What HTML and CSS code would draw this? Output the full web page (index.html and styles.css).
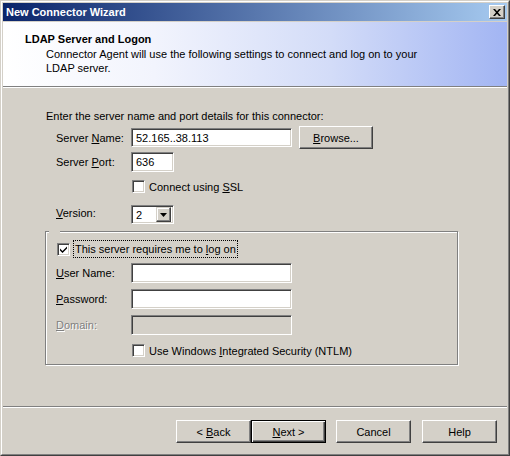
FILE: index.html
```html
<!DOCTYPE html>
<html>
<head>
<meta charset="utf-8">
<link rel="stylesheet" href="styles.css">
</head>
<body>
<div class="window">
  <div class="frame">
    <div class="titlebar">
      <span class="title">New Connector Wizard</span>
      <span class="closebtn"><svg width="8" height="7" viewBox="0 0 8 7"><path d="M0 0h2l2 2.2L6 0h2L5 3.5 8 7H6L4 4.8 2 7H0l3-3.5z" fill="#000"/></svg></span>
    </div>
    <div class="header">
      <div class="h-title">LDAP Server and Logon</div>
      <div class="h-desc">Connector Agent will use the following settings to connect and log on to your<br>LDAP server.</div>
    </div>
    <div class="sep"></div>
    <div class="body">
      <div class="content">
        <div class="intro">Enter the server name and port details for this connector:</div>
        <div class="row row-name">
          <span class="label">Server <u>N</u>ame:</span>
          <span class="field field-name">52.165..38.113</span>
          <span class="btn btn-browse"><span><u>B</u>rowse...</span></span>
        </div>
        <div class="row row-port">
          <span class="label">Server <u>P</u>ort:</span>
          <span class="field field-port">636</span>
        </div>
        <div class="row row-ssl">
          <span class="check"></span>
          <span class="check-text">Connect using <u>S</u>SL</span>
        </div>
        <div class="row row-version">
          <span class="label"><u>V</u>ersion:</span>
          <span class="combo"><span class="combo-val">2</span><span class="combo-btn"><svg width="7" height="4" viewBox="0 0 7 4"><path d="M0 0h7L3.5 4z" fill="#000"/></svg></span></span>
        </div>
        <div class="group">
          <span class="group-gap"></span>
          <div class="row row-logon">
            <span class="check checked"><svg width="7" height="7" viewBox="0 0 7 7"><path d="M0 2.5l2.5 2.5L7 0.5v2L2.5 7 0 4.5z" fill="#000"/></svg></span>
            <span class="focus">This server requires me to <u>l</u>og on</span>
          </div>
          <div class="row row-user">
            <span class="label"><u>U</u>ser Name:</span>
            <span class="field field-name"></span>
          </div>
          <div class="row row-pass">
            <span class="label"><u>P</u>assword:</span>
            <span class="field field-name"></span>
          </div>
          <div class="row row-domain">
            <span class="label disabled"><u>D</u>omain:</span>
            <span class="field field-name field-disabled"></span>
          </div>
          <div class="row row-ntlm">
            <span class="check"></span>
            <span class="check-text">Use Windows <u>I</u>ntegrated Security (NTLM)</span>
          </div>
        </div>
      </div>
    </div>
    <div class="sep"></div>
    <div class="buttons">
      <span class="btn btn-wiz"><span>&lt; <u>B</u>ack</span></span>
      <span class="btn btn-wiz btn-default"><span><u>N</u>ext &gt;</span></span>
      <span class="btn btn-wiz btn-cancel">Cancel</span>
      <span class="btn btn-wiz btn-help">Help</span>
    </div>
  </div>
</div>
</body>
</html>
```
FILE: styles.css
```css
* { box-sizing: border-box; }
html, body { margin: 0; padding: 0; }
body {
  font-family: "Liberation Sans", Arial, sans-serif;
  font-size: 11px;
  color: #000;
  background: #d4d0c8;
}
u { text-decoration: underline; text-underline-offset: 1px; }

.window {
  width: 510px;
  height: 456px;
  border: 1px solid;
  border-color: #d4d0c8 #404040 #404040 #d4d0c8;
}
.frame {
  height: 100%;
  border: 1px solid;
  border-color: #fff #808080 #808080 #fff;
  padding: 1px;
  background: #d4d0c8;
  display: flex;
  flex-direction: column;
}

.titlebar {
  height: 18px;
  margin-bottom: 1px;
  flex: none;
  background: linear-gradient(to right, #0a246a, #a6caf0);
  display: flex;
  align-items: center;
  justify-content: space-between;
  padding: 0 2px 0 3px;
}
.title {
  color: #fff;
  font-weight: bold;
  font-size: 11px;
}
.closebtn {
  width: 16px;
  height: 14px;
  background: #d4d0c8;
  border: 1px solid;
  border-color: #fff #404040 #404040 #fff;
  box-shadow: inset -1px -1px 0 #808080;
  display: flex;
  align-items: center;
  justify-content: center;
  padding-right: 1px;
}

.header {
  height: 64px;
  flex: none;
  background: linear-gradient(to right, #ffffff 0%, #f2f4fd 30%, #d3dcf8 65%, #a2b5f3 100%);
  padding: 10px 0 0 22px;
}
.h-title {
  font-weight: bold;
  line-height: 14px;
}
.h-desc {
  margin-top: 1px;
  padding-left: 21px;
  line-height: 14px;
}

.sep {
  height: 2px;
  flex: none;
  border-top: 1px solid #808080;
  border-bottom: 1px solid #fff;
}

.body {
  height: 318px;
  flex: none;
}
.content {
  padding: 22px 0 0 43px;
}
.intro { line-height: 13px; }

.row {
  display: flex;
  align-items: center;
  padding-left: 10px;
}
.label {
  width: 75px;
  flex: none;
  white-space: nowrap;
}
.label.disabled {
  color: #808080;
  text-shadow: 1px 1px 0 #fff;
}
.field {
  height: 20px;
  background: #fff;
  border: 1px solid;
  border-color: #808080 #fff #fff #808080;
  box-shadow: inset 1px 1px 0 #404040, inset -1px -1px 0 #d4d0c8;
  padding: 0 0 0 4px;
  display: flex;
  align-items: center;
  flex: none;
}
.field-name { width: 161px; }
.field-port { width: 43px; }
.field-disabled { background: #d4d0c8; }

.btn {
  height: 23px;
  border: 1px solid;
  border-color: #fff #404040 #404040 #fff;
  box-shadow: inset -1px -1px 0 #808080, inset 1px 1px 0 #d4d0c8;
  background: #d4d0c8;
  display: flex;
  align-items: center;
  justify-content: center;
  flex: none;
  white-space: pre;
}
.btn-browse { width: 74px; margin-left: 7px; }

.row-name { margin-top: 3px; height: 23px; }
.row-name .field { height: 19px; }
.row-port { margin-top: 3px; height: 20px; }
.row-ssl { margin-top: 8px; height: 13px; padding-left: 86px; }
.row-version { margin-top: 12px; height: 19px; }
.row-version .label { margin-top: -3px; }

.check {
  width: 13px;
  height: 13px;
  flex: none;
  background: #fff;
  border: 1px solid;
  border-color: #808080 #fff #fff #808080;
  box-shadow: inset 1px 1px 0 #404040, inset -1px -1px 0 #d4d0c8;
  display: flex;
  align-items: center;
  justify-content: center;
}
.check-text { margin-left: 4px; white-space: nowrap; }

.combo {
  width: 43px;
  height: 19px;
  background: #fff;
  border: 1px solid;
  border-color: #808080 #fff #fff #808080;
  box-shadow: inset 1px 1px 0 #404040, inset -1px -1px 0 #d4d0c8;
  padding: 2px 2px 2px 4px;
  display: flex;
  align-items: center;
  justify-content: space-between;
}
.combo-btn {
  width: 15px;
  height: 15px;
  background: #d4d0c8;
  border: 1px solid;
  border-color: #d4d0c8 #404040 #404040 #d4d0c8;
  box-shadow: inset -1px -1px 0 #808080, inset 1px 1px 0 #fff;
  display: flex;
  align-items: center;
  justify-content: center;
  padding-top: 1px;
}

.group {
  position: relative;
  margin: 7px 0 0 -1px;
  width: 413px;
  height: 134px;
  border: 1px solid #808080;
  box-shadow: inset 1px 1px 0 #fff, 1px 1px 0 #fff;
  padding: 8px 0 0 0;
}
.group-gap {
  position: absolute;
  top: -1px;
  left: 3px;
  width: 11px;
  height: 2px;
  background: #d4d0c8;
}
.row-logon { height: 18px; padding-left: 11px; }
.focus {
  margin-left: 3px;
  height: 18px;
  line-height: 16px;
  padding: 0 1px;
  border: 1px dotted #000;
  white-space: nowrap;
}
.row-user { margin-top: 5px; height: 20px; }
.row-pass { margin-top: 6px; height: 20px; }
.row-domain { margin-top: 6px; height: 20px; }
.row-ntlm { margin-top: 9px; height: 13px; padding-left: 86px; }

.buttons {
  flex: 1;
  display: flex;
  justify-content: flex-end;
  align-items: flex-start;
  padding: 12px 10px 0 0;
}
.btn-wiz { width: 75px; }
.btn-default {
  border: 1px solid #000;
  box-shadow: inset 1px 1px 0 #fff, inset -1px -1px 0 #404040, inset -2px -2px 0 #808080;
}
.btn-cancel { margin-left: 10px; }
.btn-help { margin-left: 11px; }
```
